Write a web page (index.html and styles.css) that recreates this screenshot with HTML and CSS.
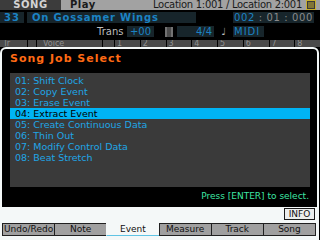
FILE: index.html
```html
<!DOCTYPE html>
<html lang="en">
<head>
    <meta charset="UTF-8">
    <title>Song Job Select</title>
    <link rel="stylesheet" href="styles.css">
</head>
<body>
    <div class="screen">
        <div class="topbar">
            <div class="mode">SONG</div>
            <div class="page">Play</div>
            <div class="location">Location 1:001 / Location 2:001</div>
            <svg class="menu-icon" width="10" height="10" viewBox="0 0 10 10">
                <rect x="0.5" y="0.5" width="9" height="9" fill="none" stroke="#c8b030"/>
                <path d="M2 3h6M2 5h6M2 7h6" stroke="#c8b030"/>
            </svg>
        </div>

        <div class="row song-row">
            <div class="box num">33</div>
            <div class="box name">On Gossamer Wings</div>
            <div class="spacer"></div>
            <div class="box time"><span class="hl">002</span> : 01 : 000</div>
        </div>

        <div class="row info-row">
            <span class="label">Trans</span>
            <div class="box trans">+00</div>
            <svg class="grid-icon" width="8" height="10" viewBox="0 0 8 10">
                <path d="M0 1h8M0 3h8M0 5h8M0 7h8M0 9h8M1 0v10M7 0v10" stroke="#9a9a9a"/>
            </svg>
            <div class="box meter">4/4</div>
            <span class="note">&#9833;</span>
            <div class="box clock">MIDI</div>
        </div>

        <div class="row header-row">
            <div class="cell tr">Tr</div>
            <div class="cell sm"></div>
            <div class="cell voice">Voice</div>
            <div class="cell sm2"></div>
            <div class="cell part">1</div>
            <div class="cell part">2</div>
            <div class="cell part">3</div>
            <div class="cell part">4</div>
            <div class="cell part">5</div>
            <div class="cell part">6</div>
            <div class="cell part">7</div>
            <div class="cell part">8</div>
        </div>

        <div class="dialog">
            <div class="dialog-body">
                <div class="dialog-title">Song Job Select</div>
                <ul class="job-list">
                    <li>01: Shift Clock</li>
                    <li>02: Copy Event</li>
                    <li>03: Erase Event</li>
                    <li class="selected">04: Extract Event</li>
                    <li>05: Create Continuous Data</li>
                    <li>06: Thin Out</li>
                    <li>07: Modify Control Data</li>
                    <li>08: Beat Stretch</li>
                </ul>
                <div class="hint">Press [ENTER] to select.</div>
            </div>
            <div class="dialog-foot">
                <button class="info-btn">INFO</button>
            </div>
            <div class="tabs">
                <div class="tab">Undo/Redo</div>
                <div class="tab">Note</div>
                <div class="tab active">Event</div>
                <div class="tab">Measure</div>
                <div class="tab">Track</div>
                <div class="tab">Song</div>
            </div>
        </div>
    </div>
</body>
</html>
```

FILE: styles.css
```css
body {
    margin: 0;
    background: #000;
    font-family: "DejaVu Sans", sans-serif;
}

.screen {
    position: relative;
    width: 320px;
    height: 240px;
    overflow: hidden;
    background: #000;
}

.topbar {
    display: flex;
    align-items: center;
    height: 10px;
    background: #a2a2a2;
    color: #1a1a1a;
    font-size: 10px;
    font-weight: bold;
    line-height: 10px;
}

.mode {
    width: 61px;
    height: 10px;
    background: #3c3c3c;
    color: #d4d4d4;
    text-align: center;
    letter-spacing: 0.5px;
}

.page {
    padding-left: 9px;
    letter-spacing: 0.5px;
}

.location {
    margin-left: auto;
    font-weight: normal;
    font-size: 10px;
    letter-spacing: -0.3px;
}

.menu-icon {
    margin: 0 4px 0 4px;
    background: #3a3a3a;
}

.row {
    display: flex;
    align-items: center;
}

.box {
    background: #17252b;
    color: #1b83c4;
    font-weight: bold;
    height: 11px;
    line-height: 11px;
}

.song-row {
    margin-top: 2px;
    height: 11px;
    font-size: 10px;
}

.num {
    width: 24px;
    text-align: center;
    letter-spacing: 1px;
}

.name {
    width: 164px;
    margin-left: 3px;
    padding-left: 5px;
    letter-spacing: 0.8px;
}

.spacer {
    flex: 1;
}

.time {
    width: 81px;
    margin-right: 6px;
    color: #8a8a8a;
    font-weight: normal;
    text-align: center;
    letter-spacing: 0.6px;
}

.time .hl {
    color: #1b83c4;
}

.info-row {
    margin-top: 3px;
    height: 11px;
    font-size: 10px;
}

.label {
    margin-left: 97px;
    color: #bdbdbd;
    width: 30px;
}

.trans {
    width: 27px;
    text-align: center;
    font-weight: normal;
}

.grid-icon {
    margin-left: 11px;
}

.meter {
    width: 35px;
    margin-left: 4px;
    text-align: right;
    padding-right: 2px;
    font-weight: normal;
}

.note {
    width: 19px;
    color: #bdbdbd;
    text-align: center;
    font-size: 10px;
}

.clock {
    width: 30px;
    padding-left: 1px;
    font-weight: normal;
    letter-spacing: 1px;
}

.header-row {
    margin-top: 3px;
    height: 7px;
    font-size: 8px;
    color: #909090;
    gap: 1px;
}

.cell {
    height: 7px;
    line-height: 8px;
    background: #4a4a4a;
    overflow: hidden;
}

.tr {
    width: 24px;
    padding-left: 3px;
}

.sm {
    width: 8px;
}

.voice {
    width: 59px;
    padding-left: 6px;
}

.sm2 {
    width: 11px;
}

.part {
    flex: 1;
    padding-left: 2px;
}

.dialog {
    position: absolute;
    left: 0;
    top: 47px;
    width: 319px;
    height: 193px;
    background: #f4f8f8;
    border-radius: 6px 6px 0 0;
    display: flex;
    flex-direction: column;
}

.dialog-body {
    margin: 2px 2px 0 2px;
    height: 158px;
    background: #000;
    border-radius: 4px 4px 0 0;
    display: flex;
    flex-direction: column;
}

.dialog-title {
    margin: 5px 0 0 8px;
    height: 19px;
    color: #ff6a14;
    font-size: 11px;
    font-weight: bold;
    line-height: 10px;
    letter-spacing: 1px;
}

.job-list {
    list-style: none;
    margin: 0 7px 0 8px;
    padding: 2px 0 0 0;
    height: 112px;
    background: #3a3a3a;
    font-size: 9.5px;
}

.job-list li {
    height: 11px;
    line-height: 11px;
    padding-left: 5px;
    color: #1fa6e6;
}

.job-list li.selected {
    background: #00b4f4;
    color: #000;
}

.hint {
    margin: 4px 8px 0 0;
    text-align: right;
    color: #3ee6a4;
    font-size: 9px;
}

.dialog-foot {
    display: flex;
    justify-content: flex-end;
    height: 15px;
    padding-top: 1px;
}

.info-btn {
    margin-right: 4px;
    width: 31px;
    height: 12px;
    padding: 0;
    background: #eceeee;
    border: 1px solid #1a1a1a;
    font-family: "DejaVu Sans", sans-serif;
    font-size: 9px;
    line-height: 10px;
    color: #111;
}

.tabs {
    display: flex;
    margin: 0 4px 0 2px;
    height: 13px;
}

.tab {
    flex: 1;
    background: #a0a0a0;
    border: 1px solid #202020;
    margin-right: -1px;
    color: #111;
    font-size: 9px;
    line-height: 11px;
    text-align: center;
}

.tab.active {
    background: #f4f8f8;
    border-color: transparent;
    border-bottom: 1px solid #60c4e4;
}
```
